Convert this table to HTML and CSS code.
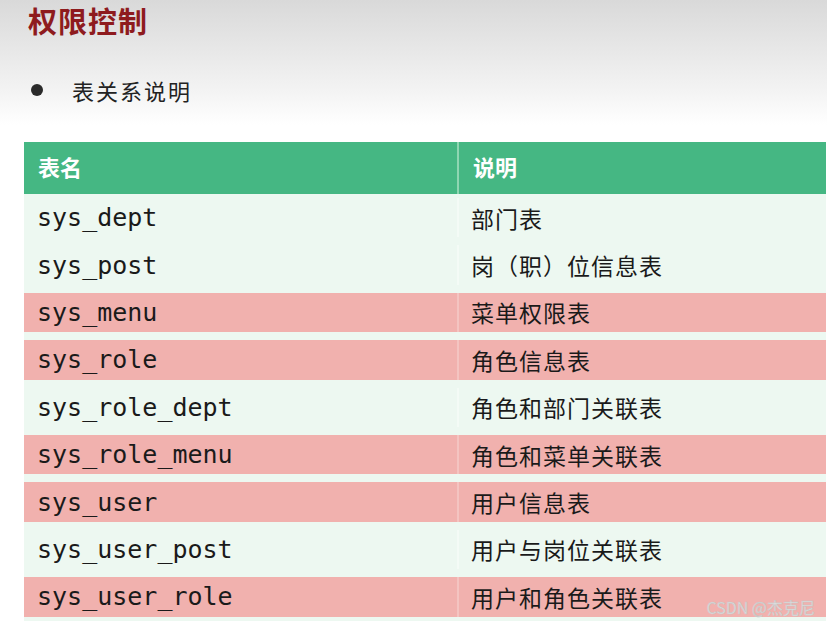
FILE: index.html
```html
<!DOCTYPE html>
<html lang="zh">
<head>
<meta charset="utf-8">
<link rel="stylesheet" href="styles.css">
</head>
<body>
<div class="page">
  <h1 class="title">权限控制</h1>
  <div class="bullet-line"><span class="dot"></span><span class="bullet-text">表关系说明</span></div>
  <table class="tbl">
    <thead>
      <tr><th class="c1"><div class="cell">表名</div></th><th class="c2"><div class="cell">说明</div></th></tr>
    </thead>
    <tbody>
      <tr><td class="c1"><div class="cell mono">sys_dept</div></td><td class="c2"><div class="cell">部门表</div></td></tr>
      <tr><td class="c1"><div class="cell mono">sys_post</div></td><td class="c2"><div class="cell">岗（职）位信息表</div></td></tr>
      <tr class="hl"><td class="c1"><div class="cell mono">sys_menu</div></td><td class="c2"><div class="cell">菜单权限表</div></td></tr>
      <tr class="hl"><td class="c1"><div class="cell mono">sys_role</div></td><td class="c2"><div class="cell">角色信息表</div></td></tr>
      <tr><td class="c1"><div class="cell mono">sys_role_dept</div></td><td class="c2"><div class="cell">角色和部门关联表</div></td></tr>
      <tr class="hl"><td class="c1"><div class="cell mono">sys_role_menu</div></td><td class="c2"><div class="cell">角色和菜单关联表</div></td></tr>
      <tr class="hl"><td class="c1"><div class="cell mono">sys_user</div></td><td class="c2"><div class="cell">用户信息表</div></td></tr>
      <tr><td class="c1"><div class="cell mono">sys_user_post</div></td><td class="c2"><div class="cell">用户与岗位关联表</div></td></tr>
      <tr class="hl"><td class="c1"><div class="cell mono">sys_user_role</div></td><td class="c2"><div class="cell">用户和角色关联表</div></td></tr>
    </tbody>
  </table>
  <div class="watermark">CSDN @杰克尼</div>
</div>
</body>
</html>
```
FILE: styles.css
```css
html, body {
  margin: 0;
  padding: 0;
  width: 827px;
  height: 629px;
  overflow: hidden;
  background: #ffffff;
}
.page {
  position: relative;
  width: 827px;
  height: 629px;
  background: linear-gradient(to bottom, #d9d9d9 0px, #f3f3f3 90px, #ffffff 125px, #ffffff 100%);
  font-family: "Noto Sans CJK SC", "Noto Sans", sans-serif;
}
.title {
  margin: 0;
  padding: 1px 0 0 28px;
  height: 40px;
  font-size: 29px;
  line-height: 38px;
  font-weight: 700;
  color: #8e1b1e;
  letter-spacing: 1px;
}
.bullet-line {
  display: flex;
  align-items: center;
  padding: 29px 0 0 31px;
  height: 40px;
}
.dot {
  width: 12px;
  height: 12px;
  border-radius: 50%;
  background: #2a2a2a;
}
.bullet-text {
  margin-left: 29px;
  font-size: 22px;
  letter-spacing: 2px;
  color: #222;
}
.tbl {
  margin: 32px 0 0 24px;
  width: 802px;
  border-collapse: collapse;
  border-spacing: 0;
}
.tbl th, .tbl td {
  padding: 0;
  text-align: left;
  vertical-align: top;
}
.tbl .c1 { width: 433px; }
.tbl th .cell {
  height: 52px;
  box-sizing: border-box;
  padding-bottom: 5px;
  background: #45b783;
  color: #ffffff;
  font-size: 22px;
  font-weight: 700;
  display: flex;
  align-items: center;
  padding-left: 14px;
}
.tbl th.c2 .cell {
  border-left: 2px solid #8fd6b2;
}
.tbl td {
  background: #edf8f1;
  padding: 4px 0 4px 0;
}
.tbl td .cell {
  height: 39.4px;
  display: flex;
  align-items: center;
  padding-left: 14px;
  font-size: 23px;
  letter-spacing: 1px;
  color: #1a1a1a;
}
.tbl td.c2 .cell {
  border-left: 2px solid #f4fbf6;
  padding-left: 12px;
}
.tbl tr.hl td .cell {
  background: #f1b1ae;
}
.tbl tr.hl td.c2 .cell {
  border-left-color: #f4c4c1;
}
.mono {
  font-family: "DejaVu Sans Mono", "Liberation Mono", monospace;
  font-size: 25px !important;
  letter-spacing: 0 !important;
}
.tbl td.c1 .cell.mono {
  padding-left: 13px;
}
.watermark {
  position: absolute;
  right: 12px;
  bottom: 10px;
  font-family: "Noto Sans CJK SC", sans-serif;
  font-size: 16px;
  color: #dcdcdc;
  -webkit-text-stroke: 0.4px #c4c4c4;
}
```
